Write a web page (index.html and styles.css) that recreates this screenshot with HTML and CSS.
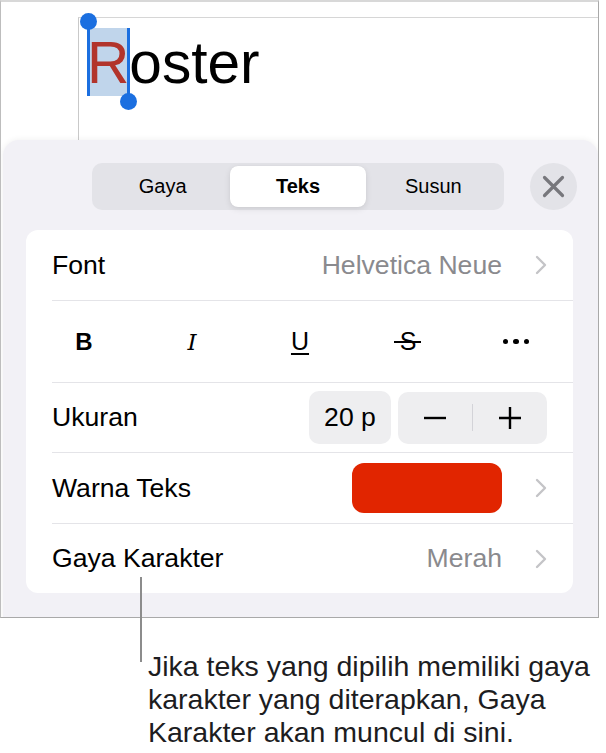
FILE: index.html
```html
<!DOCTYPE html>
<html lang="id">
<head>
<meta charset="utf-8">
<title>Teks</title>
<link rel="stylesheet" href="styles.css">
</head>
<body>
<div class="figure">
  <div class="frame">
    <div class="doc">
      <div class="page">
        <div class="title"><span class="sel">R<i class="handle h-start"></i><i class="handle h-end"></i></span>oster</div>
      </div>
    </div>
    <div class="panel">
      <div class="top">
        <div class="seg">
          <div class="seg-item">Gaya</div>
          <div class="seg-item active">Teks</div>
          <div class="seg-item">Susun</div>
        </div>
        <div class="close">
          <svg width="47" height="47" viewBox="0 0 47 47"><path d="M14.5 14.5 L32.5 32.5 M32.5 14.5 L14.5 32.5" stroke="#77777c" stroke-width="3.2" stroke-linecap="round" fill="none"/></svg>
        </div>
      </div>
      <div class="card">
        <div class="row row-font">
          <span class="label">Font</span>
          <span class="value">Helvetica Neue</span>
          <svg class="chev" width="12" height="20" viewBox="0 0 12 20"><path d="M2 2 L10 10 L2 18" stroke="#c4c4c7" stroke-width="2.4" stroke-linecap="round" stroke-linejoin="round" fill="none"/></svg>
        </div>
        <div class="row row-format">
          <span class="fmt fmt-b">B</span>
          <span class="fmt fmt-i">I</span>
          <span class="fmt fmt-u">U</span>
          <span class="fmt fmt-s">S</span>
          <span class="fmt fmt-more"><i class="dot"></i><i class="dot"></i><i class="dot"></i></span>
        </div>
        <div class="row row-size">
          <span class="label">Ukuran</span>
          <span class="size-box">20 p</span>
          <span class="stepper">
            <span class="step"><svg width="24" height="24" viewBox="0 0 24 24"><path d="M1 12 H23" stroke="#000" stroke-width="2.4" fill="none"/></svg></span>
            <i class="step-div"></i>
            <span class="step"><svg width="24" height="24" viewBox="0 0 24 24"><path d="M1 12 H23 M12 1 V23" stroke="#000" stroke-width="2.4" fill="none"/></svg></span>
          </span>
        </div>
        <div class="row row-color">
          <span class="label">Warna Teks</span>
          <span class="swatch"></span>
          <svg class="chev" width="12" height="20" viewBox="0 0 12 20"><path d="M2 2 L10 10 L2 18" stroke="#c4c4c7" stroke-width="2.4" stroke-linecap="round" stroke-linejoin="round" fill="none"/></svg>
        </div>
        <div class="row row-style">
          <span class="label">Gaya Karakter</span>
          <span class="value">Merah</span>
          <svg class="chev" width="12" height="20" viewBox="0 0 12 20"><path d="M2 2 L10 10 L2 18" stroke="#c4c4c7" stroke-width="2.4" stroke-linecap="round" stroke-linejoin="round" fill="none"/></svg>
        </div>
      </div>
    </div>
  </div>
  <div class="callout-line"></div>
  <p class="callout">Jika teks yang dipilih memiliki gaya karakter yang diterapkan, Gaya Karakter akan muncul di sini.</p>
</div>
</body>
</html>
```
FILE: styles.css
```css
* { box-sizing: border-box; }
html, body { margin: 0; padding: 0; background: #fff; }
body { font-family: "Liberation Sans", Arial, sans-serif; color: #000; width: 606px; }

.figure { position: relative; width: 606px; }

.frame {
  width: 599px;
  height: 618px;
  border-top: 2px solid #d8d8d8;
  border-left: 1px solid #bdbdbd;
  border-right: 1px solid #a9a9a9;
  border-bottom: 1px solid #a9a9a9;
  display: flex;
  flex-direction: column;
  overflow: hidden;
}

.doc {
  height: 138px;
  flex: none;
  padding: 15px 0 0 77px;
  display: flex;
  flex-direction: column;
}
.page {
  flex: 1;
  border-top: 1px solid #d6d6d6;
  border-left: 1px solid #c9c9c9;
  padding: 10px 0 0 8px;
}
.title {
  font-size: 58.6px;
  line-height: 68px;
  color: #000;
  white-space: nowrap;
}
.sel {
  position: relative;
  display: inline-block;
  line-height: 64px;
  padding-top: 3px;
  height: 68px;
  background: #c0d5eb;
  color: #b2342b;
  vertical-align: baseline;
}
.handle {
  position: absolute;
  top: 0;
  bottom: 0;
  width: 3px;
  background: #1b6fe0;
}
.handle::after {
  content: "";
  position: absolute;
  width: 17px;
  height: 17px;
  border-radius: 50%;
  background: #1b6fe0;
}
.h-start { left: 0; }
.h-start::after { left: -7px; top: -15px; }
.h-end { right: -1px; }
.h-end::after { left: -7px; bottom: -14px; }

.panel {
  flex: 1;
  margin-left: 2px;
  background: #f2f1f6;
  border-radius: 16px 16px 0 0;
  box-shadow: 0 0 6px rgba(0, 0, 0, 0.07);
  padding-top: 23px;
}

.top {
  display: flex;
  align-items: center;
  gap: 26px;
  margin-left: 89px;
  height: 47px;
}
.seg {
  width: 412px;
  height: 47px;
  background: #e3e3e8;
  border-radius: 10px;
  padding: 3px;
  display: grid;
  grid-template-columns: 1fr 1fr 1fr;
}
.seg-item {
  font-size: 20px;
  line-height: 41px;
  text-align: center;
  color: #000;
}
.seg-item.active {
  background: #fff;
  border-radius: 8px;
  font-weight: 700;
  box-shadow: 0 2px 6px rgba(0, 0, 0, 0.10), 0 0 1px rgba(0, 0, 0, 0.08);
}
.close {
  width: 47px;
  height: 47px;
  border-radius: 50%;
  background: #e3e3e8;
  display: flex;
}

.card {
  margin: 20px 0 0 23px;
  width: 547px;
  background: #fff;
  border-radius: 12px;
}
.row {
  display: flex;
  align-items: center;
  margin-left: 26px;
  padding-right: 26px;
  border-bottom: 1px solid #e4e4e8;
  font-size: 26.6px;
}
.row:last-child { border-bottom: none; }
.row-font { height: 71px; }
.row-format { height: 82px; }
.row-size { height: 70px; }
.row-color { height: 71px; }
.row-style { height: 69px; }

.label { color: #000; white-space: nowrap; }
.value { margin-left: auto; color: #8a8a8e; white-space: nowrap; }
.chev { margin-left: 33px; flex: none; }

.row-format { padding-left: 10px; gap: 64px; }
.fmt {
  width: 44px;
  height: 44px;
  display: flex;
  align-items: center;
  justify-content: center;
  flex: none;
  color: #000;
}
.fmt-b { font-size: 24px; font-weight: 700; }
.fmt-i { font-family: "DejaVu Serif", serif; font-style: italic; font-size: 23px; }
.fmt-u {
  font-size: 25px;
  text-decoration: underline;
  text-decoration-thickness: 2px;
  text-underline-offset: 3px;
}
.fmt-s { font-size: 25px; position: relative; }
.fmt-s::after {
  content: "";
  position: absolute;
  left: 8px;
  width: 27px;
  top: 21px;
  height: 2px;
  background: #000;
}
.fmt-more { gap: 5px; }
.dot {
  width: 5.5px;
  height: 5.5px;
  border-radius: 50%;
  background: #000;
}

.size-box {
  margin-left: auto;
  width: 82px;
  height: 53px;
  border-radius: 10px;
  background: #eeeef0;
  display: flex;
  align-items: center;
  justify-content: center;
}
.stepper {
  margin-left: 7px;
  width: 149px;
  height: 52px;
  border-radius: 10px;
  background: #eeeef0;
  display: flex;
  align-items: center;
}
.step {
  flex: 1;
  display: flex;
  align-items: center;
  justify-content: center;
}
.step-div {
  width: 1px;
  height: 27px;
  background: #d3d3d8;
}

.swatch {
  margin-left: auto;
  width: 150px;
  height: 50px;
  border-radius: 12px;
  background: #e12500;
}

.callout-line {
  position: absolute;
  left: 140px;
  top: 577px;
  width: 2px;
  height: 85px;
  background: #8c8c8c;
}
.callout {
  margin: 32px 0 0;
  padding-left: 148px;
  font-size: 28.5px;
  line-height: 33px;
  color: #1d1d1f;
}
```
